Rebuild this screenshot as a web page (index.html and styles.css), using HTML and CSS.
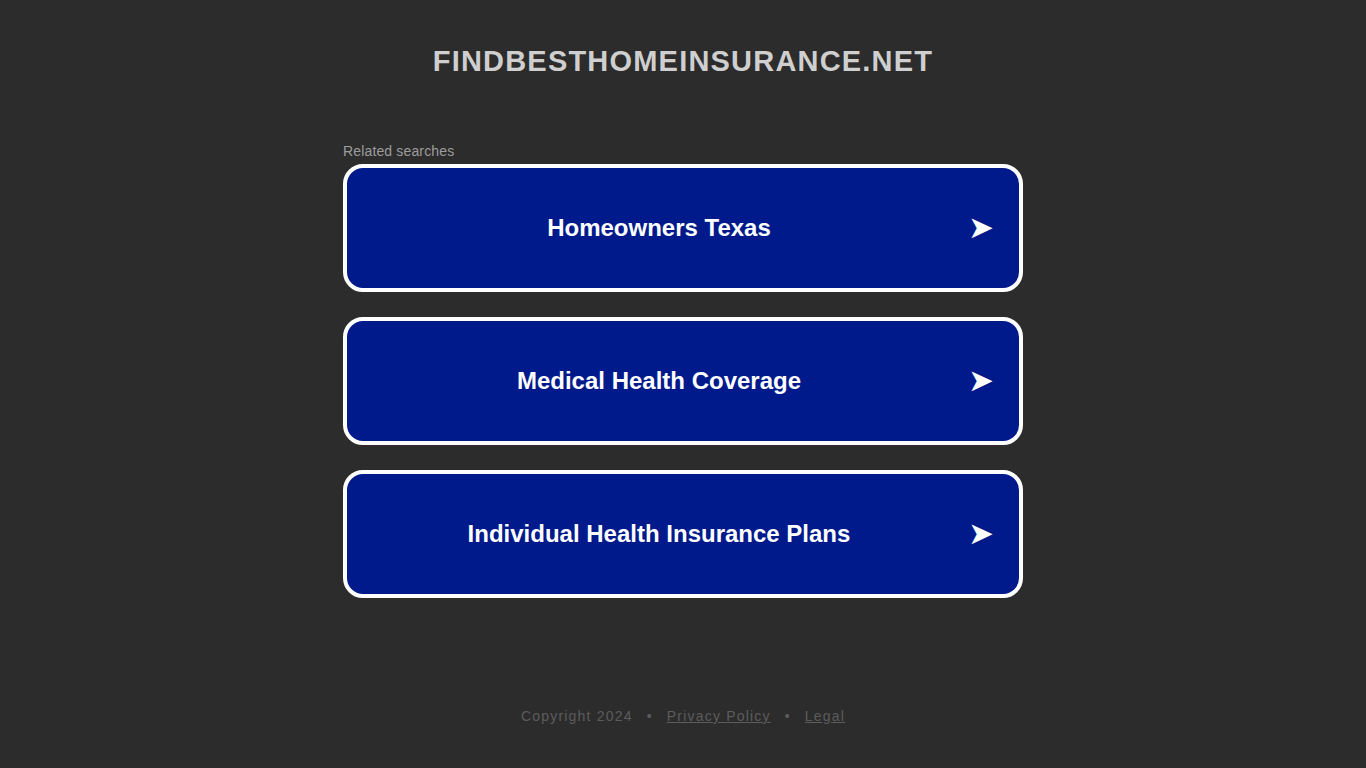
FILE: index.html
```html
<!DOCTYPE html>
<html>
<head>
<meta charset="utf-8">
<title>findbesthomeinsurance.net</title>
<link rel="stylesheet" href="styles.css">
</head>
<body>
<div class="page">
  <header class="header">
    <h1 class="domain">findbesthomeinsurance.net</h1>
  </header>
  <main class="main">
    <div class="related">Related searches</div>
    <div class="list">
      <a class="item" href="#"><span class="label">Homeowners Texas</span><span class="arrow">➤</span></a>
      <a class="item" href="#"><span class="label">Medical Health Coverage</span><span class="arrow">➤</span></a>
      <a class="item" href="#"><span class="label">Individual Health Insurance Plans</span><span class="arrow">➤</span></a>
    </div>
  </main>
  <footer class="footer">
    <span>Copyright 2024</span><span class="dot">•</span><a href="#">Privacy Policy</a><span class="dot">•</span><a href="#">Legal</a>
  </footer>
</div>
</body>
</html>
```
FILE: styles.css
```css
html, body {
  margin: 0;
  padding: 0;
  background: #2c2c2c;
  font-family: "Liberation Sans", Arial, sans-serif;
}
.page {
  height: 768px;
  display: flex;
  flex-direction: column;
  align-items: center;
}
.header {
  padding-top: 43px;
  height: 100px;
  box-sizing: border-box;
}
.domain {
  margin: 0;
  font-size: 29px;
  line-height: 36px;
  font-weight: bold;
  text-transform: uppercase;
  letter-spacing: 1.2px;
  color: #cfcfcf;
}
.main {
  width: 680px;
  margin-top: 43px;
}
.related {
  font-size: 14px;
  line-height: 16px;
  letter-spacing: 0.15px;
  color: #9c9c9c;
  margin-bottom: 5px;
}
.list {
  display: flex;
  flex-direction: column;
  gap: 25px;
}
.item {
  display: flex;
  align-items: center;
  justify-content: center;
  position: relative;
  height: 128px;
  box-sizing: border-box;
  border: 4px solid #ffffff;
  border-radius: 20px;
  background: #001a8b;
  color: #ffffff;
  text-decoration: none;
}
.label {
  font-size: 24px;
  font-weight: bold;
  margin-left: -48px;
}
.arrow {
  position: absolute;
  right: 25px;
  top: calc(50% - 1px);
  transform: translateY(-50%);
  font-family: "DejaVu Sans", sans-serif;
  font-size: 31px;
  line-height: 1;
}
.footer {
  margin-top: auto;
  margin-bottom: 44px;
  font-size: 14px;
  letter-spacing: 1.2px;
  color: #5c5c5c;
}
.footer a {
  color: #5c5c5c;
}
.dot {
  margin: 0 14px;
}
```
